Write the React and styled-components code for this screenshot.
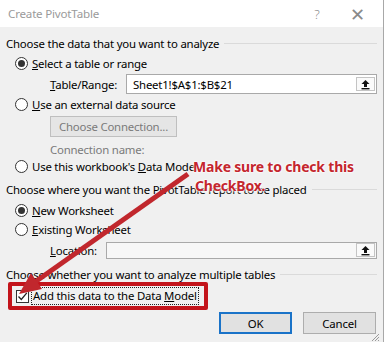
import React from 'react'
import styled, { createGlobalStyle } from 'styled-components'

const GlobalStyle = createGlobalStyle`
  html, body {
    margin: 0;
    padding: 0;
    background: #ffffff;
  }
  body {
    font-family: "Noto Sans", "Open Sans", sans-serif;
  }
`

const Page = styled.div`
  position: relative;
  width: 387px;
  height: 342px;
  overflow: hidden;
  background: #ffffff;
`

const Dialog = styled.div`
  width: 384px;
  height: 342px;
  box-sizing: border-box;
  border-right: 1px solid #a8a8a8;
  background: #f0f0f0;
  display: flex;
  flex-direction: column;
  font-size: 11.4px;
  letter-spacing: -0.2px;
  color: #000;
`

const TitleBar = styled.div`
  height: 27px;
  flex: none;
  background: #ffffff;
  display: flex;
  align-items: center;
  padding: 0 6px 0 8px;
  color: #9a9a9a;
  font-size: 11.6px;
`

const TitleText = styled.span`
  flex: 1;
`

const TitleButton = styled.span`
  width: 40px;
  text-align: center;
  color: #8a8a8a;
  font-size: ${p => p.$size || 13}px;
  font-weight: 300;
`

const Body = styled.div`
  position: relative;
  flex: 1;
  padding: 0 6px;
  display: flex;
  flex-direction: column;
`

const GroupHeader = styled.div`
  height: ${p => p.$h || 18}px;
  margin-top: ${p => p.$mt || 0}px;
  display: flex;
  align-items: center;
  gap: 5px;
  white-space: nowrap;

  &::after {
    content: '';
    flex: 1;
    height: 1px;
    background: #dadada;
  }
`

const OptionRow = styled.div`
  height: ${p => p.$h || 18}px;
  margin-top: ${p => p.$mt || 0}px;
  padding-left: 9px;
  display: flex;
  align-items: center;
  gap: 4px;
  white-space: nowrap;
`

const Radio = styled.span`
  width: 13px;
  height: 13px;
  box-sizing: border-box;
  border: 1px solid #333;
  border-radius: 50%;
  background: #fff;
  display: flex;
  align-items: center;
  justify-content: center;

  &::after {
    content: '';
    width: 7px;
    height: 7px;
    border-radius: 50%;
    background: ${p => (p.$checked ? '#333' : 'transparent')};
  }
`

const FieldRow = styled.div`
  height: ${p => p.$h || 20}px;
  margin-top: ${p => p.$mt || 0}px;
  padding-left: 44px;
  display: flex;
  align-items: center;
  white-space: nowrap;
`

const FieldLabel = styled.span`
  width: ${p => p.$w}px;
  flex: none;
`

const RangeInput = styled.div`
  width: ${p => p.$w || 252}px;
  height: ${p => p.$h || 20}px;
  box-sizing: border-box;
  border: 1px solid #a9a9a9;
  background: ${p => (p.$disabled ? '#f7f7f7' : '#ffffff')};
  display: flex;
  align-items: center;
  justify-content: space-between;
  padding: 0 1px 0 6px;
`

const RefButton = styled.span`
  width: 19px;
  height: 14px;
  box-sizing: border-box;
  border: 1px solid #c4c4c4;
  background: #fafafa;
  display: flex;
  align-items: center;
  justify-content: center;
`

const ConnButton = styled.div`
  width: 127px;
  height: 21px;
  margin-top: 3px;
  margin-left: 44px;
  box-sizing: border-box;
  border: 1px solid #bfbfbf;
  background: #e5e5e5;
  color: #7a7a7a;
  display: flex;
  align-items: center;
  justify-content: center;
`

const MutedRow = styled.div`
  height: 16px;
  margin-top: 4px;
  padding-left: 44px;
  display: flex;
  align-items: center;
  color: #7a7a7a;
`

const Highlight = styled.div`
  width: 200px;
  height: 28px;
  margin-left: 2px;
  box-sizing: border-box;
  border: 4px solid #c3141b;
  border-radius: 2px;
  display: flex;
  align-items: center;
  gap: 3px;
  padding-left: 4px;
`

const CheckBox = styled.span`
  width: 13px;
  height: 13px;
  box-sizing: border-box;
  border: 1px solid #333;
  background: #fff;
  display: flex;
  align-items: center;
  justify-content: center;
`

const FocusText = styled.span`
  outline: 1px dotted #222;
  padding: 0 1px;
  line-height: 16px;
  white-space: nowrap;
`

const ButtonRow = styled.div`
  height: 22px;
  margin-top: 2px;
  padding-right: 1px;
  display: flex;
  justify-content: flex-end;
  gap: 11px;
`

const DialogButton = styled.div`
  width: 73px;
  height: 22px;
  box-sizing: border-box;
  border: ${p => (p.$primary ? '2px solid #1a73c8' : '1px solid #adadad')};
  background: #e1e1e1;
  display: flex;
  align-items: center;
  justify-content: center;
`

const Grip = styled.svg`
  position: absolute;
  right: 3px;
  bottom: 0;
`

const Callout = styled.div`
  position: absolute;
  left: 193px;
  top: 157px;
  font-family: "Noto Sans", sans-serif;
  font-weight: 700;
  font-size: 14px;
  line-height: 19px;
  color: #c4262e;
  letter-spacing: -0.2px;
  text-shadow: 0 0 2px #fff, 0 0 2px #fff, 0 0 3px #fff;
  white-space: nowrap;
`

const CalloutLine = styled.div`
  padding-left: ${p => p.$indent || 0}px;
`

const ArrowLayer = styled.svg`
  position: absolute;
  left: 0;
  top: 0;
  pointer-events: none;
`

const UpArrow = () => (
  <svg width="11" height="11" viewBox="0 0 11 11">
    <path d="M5.5 1 L1.5 5 H4 V8 H7 V5 H9.5 Z" fill="#111" />
    <rect x="1.5" y="9" width="8" height="1.4" fill="#111" />
  </svg>
)

const Check = () => (
  <svg width="11" height="11" viewBox="0 0 11 11">
    <path d="M1.5 5.5 L4.3 8.5 L9.8 1.8" fill="none" stroke="#222" strokeWidth="1.3" />
  </svg>
)

const App = () => (
  <Page>
    <GlobalStyle />
    <Dialog>
      <TitleBar>
        <TitleText>Create PivotTable</TitleText>
        <TitleButton>?</TitleButton>
        <TitleButton $size={18}>✕</TitleButton>
      </TitleBar>
      <Body>
        <GroupHeader $mt={7}>Choose the data that you want to analyze</GroupHeader>
        <OptionRow $mt={2}>
          <Radio $checked />
          <span><u>S</u>elect a table or range</span>
        </OptionRow>
        <FieldRow $mt={2}>
          <FieldLabel $w={76}><u>T</u>able/Range:</FieldLabel>
          <RangeInput>
            <span>Sheet1!$A$1:$B$21</span>
            <RefButton><UpArrow /></RefButton>
          </RangeInput>
        </FieldRow>
        <OptionRow $mt={1}>
          <Radio />
          <span><u>U</u>se an external data source</span>
        </OptionRow>
        <ConnButton>Choose Connection...</ConnButton>
        <MutedRow>Connection name:</MutedRow>
        <OptionRow>
          <Radio />
          <span>Use this workbook's <u>D</u>ata Model</span>
        </OptionRow>
        <GroupHeader $mt={5}>Choose where you want the PivotTable report to be placed</GroupHeader>
        <OptionRow $mt={3}>
          <Radio $checked />
          <span><u>N</u>ew Worksheet</span>
        </OptionRow>
        <OptionRow $mt={1}>
          <Radio />
          <span><u>E</u>xisting Worksheet</span>
        </OptionRow>
        <FieldRow $mt={4} $h={16}>
          <FieldLabel $w={56}><u>L</u>ocation:</FieldLabel>
          <RangeInput $disabled $h={17} $w={272}>
            <span />
            <RefButton><UpArrow /></RefButton>
          </RangeInput>
        </FieldRow>
        <GroupHeader $mt={9} $h={15}>Choose whether you want to analyze multiple tables</GroupHeader>
        <Highlight>
          <CheckBox><Check /></CheckBox>
          <FocusText>Add this data to the Data <u>M</u>odel</FocusText>
        </Highlight>
        <ButtonRow>
          <DialogButton $primary>OK</DialogButton>
          <DialogButton>Cancel</DialogButton>
        </ButtonRow>
        <Grip width="10" height="10" viewBox="0 0 10 10">
          <path d="M9 2 L2 9 M9 5 L5 9 M9 8 L8 9" stroke="#9a9a9a" strokeWidth="1" />
        </Grip>
      </Body>
    </Dialog>
    <Callout>
      <CalloutLine>Make sure to check this</CalloutLine>
      <CalloutLine $indent={2}>CheckBox.</CalloutLine>
    </Callout>
    <ArrowLayer width="387" height="342" viewBox="0 0 387 342">
      <line x1="188" y1="174" x2="35" y2="282" stroke="#c1272d" strokeWidth="5" />
      <polygon points="19,294 42,289 31,273" fill="#c1272d" />
    </ArrowLayer>
  </Page>
)

export default App
